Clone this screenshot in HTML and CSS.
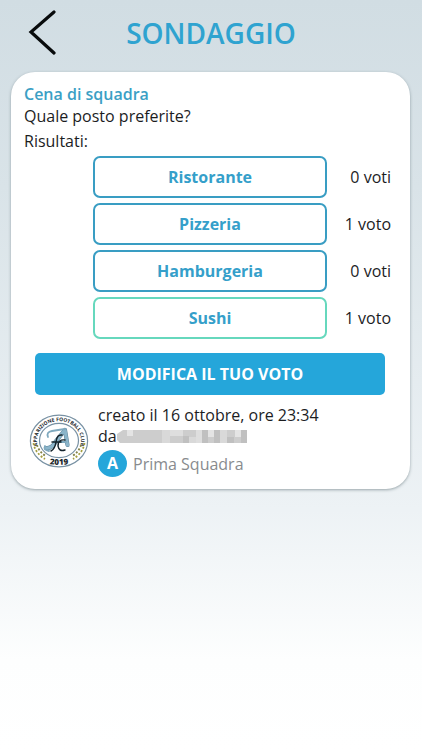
FILE: index.html
```html
<!DOCTYPE html>
<html lang="it">
<head>
<meta charset="utf-8">
<meta name="viewport" content="width=device-width, initial-scale=1">
<title>Sondaggio</title>
<link rel="stylesheet" href="styles.css">
</head>
<body>
<header class="topbar">
  <button class="back" type="button" aria-label="Indietro">
    <svg viewBox="0 0 28 46" width="28" height="46"><path d="M26 2 L3 22 L26 43" fill="none" stroke="#080b0c" stroke-width="3.200" stroke-linecap="round"/></svg>
  </button>
  <h1 class="title">SONDAGGIO</h1>
</header>
<main class="card">
  <h2 class="name">Cena di squadra</h2>
  <p class="question">Quale posto preferite?</p>
  <p class="label">Risultati:</p>
  <ul class="options">
    <li class="row"><button class="option" type="button">Ristorante</button><span class="votes">0 voti</span></li>
    <li class="row"><button class="option" type="button">Pizzeria</button><span class="votes">1 voto</span></li>
    <li class="row"><button class="option" type="button">Hamburgeria</button><span class="votes">0 voti</span></li>
    <li class="row"><button class="option chosen" type="button">Sushi</button><span class="votes">1 voto</span></li>
  </ul>
  <button class="edit" type="button">MODIFICA IL TUO VOTO</button>
  <footer class="author">
    <svg class="crest" viewBox="0 0 60 54" width="60" height="54" role="img" aria-label="Apparizione Football Club 2019">
      <defs>
        <path id="arc" d="M14 40 A22 19.500 0 1 1 46 40"/>
        <path id="year" d="M15 49.500 Q30 52 45 49.500"/>
      </defs>
      <ellipse cx="30" cy="27" rx="28.600" ry="25.800" fill="#fff" stroke="#7891a3" stroke-width="1.200"/>
      <ellipse cx="30" cy="26.500" rx="19.500" ry="17.200" fill="#fff" stroke="#7891a3" stroke-width="1.200"/>
      <text class="crest-text"><textPath href="#arc" startOffset="50%">APPARIZIONE FOOTBALL CLUB</textPath></text>
      <g fill="none" stroke="#a39e3e" stroke-width="1.800" stroke-dasharray="2 1.800">
        <path d="M4.500 29 Q6 39 16 45"/><path d="M8 31 Q10 38 17.500 42.500" stroke="#85844a"/>
        <path d="M55.500 29 Q54 39 44 45"/><path d="M52 31 Q50 38 42.500 42.500" stroke="#85844a"/>
      </g>
      <text class="crest-year"><textPath href="#year" startOffset="50%">2019</textPath></text>
      <g fill="none" stroke-linecap="round" stroke-linejoin="round">
        <path d="M17 34 Q23 35 27 27 L36 16 L38.500 31" stroke="#5d8298" stroke-width="4.200"/>
        <path d="M17 34 Q23 35 27 27 L36 16 L38.500 31" stroke="#8bb5ca" stroke-width="3.200"/>
        <path d="M19 23 Q17 18 23 17 Q29 16 36 15 M25 28 H37 M16 32 Q14 36 20 37" stroke="#7fa9be" stroke-width="1.800"/>
        <path d="M33 21 Q28 20 27 28 Q26 35 22 37 M23 28 H32 M36 26 Q29 25 29 32 Q30 38 36 36" stroke="#15242c" stroke-width="1.500"/>
      </g>
    </svg>
    <div class="details">
      <p class="line">creato il 16 ottobre, ore 23:34</p>
      <p class="line by">da<svg class="mosaic" viewBox="0 0 130 13" width="130" height="13" aria-hidden="true">
        <path d="M6 0 H130 V13 H3 L0 10 V4 Z" fill="#cdcdcd"/>
        <path d="M10 0h6v6h-6z M91 0h6v7h-6z M118 0h6v7h-6z" fill="#e4e4e4"/>
        <path d="M45 0h8v13h-8z M103 0h7v13h-7z M72 7h7v6h-7z" fill="#d9d9d9"/>
        <path d="M53 0h13v6H53z M79 0h6v13h-6z" fill="#dedede"/>
        <path d="M66 6h6v7h-6z M85 0h6v13h-6z M97 0h6v13h-6z M110 7h7v6h-7z M124 0h6v13h-6z" fill="#c0c0c0"/>
      </svg></p>
      <p class="team"><span class="badge">A</span><span>Prima Squadra</span></p>
    </div>
  </footer>
</main>
</body>
</html>
```
FILE: styles.css
```css
* { box-sizing: border-box; }

html { min-height: 100%; }

body {
  margin: 0;
  min-height: 100vh;
  background: linear-gradient(#d1dde3 0%, #d9e3e8 25%, #edf2f5 68%, #fdfefe 88%, #fff 100%);
  font-family: "Open Sans", sans-serif;
  font-size: 16px;
  line-height: 22px;
  color: #1c1d1f;
}

h1, h2, p, ul { margin: 0; padding: 0; }

button { font: inherit; padding: 0; cursor: pointer; }

.topbar {
  display: grid;
  grid-template-columns: 56px 1fr 56px;
  align-items: center;
  height: 72px;
  padding-bottom: 6px;
}

.back {
  display: flex;
  justify-content: flex-end;
  border: 0;
  background: none;
}

.title {
  text-align: center;
  font-size: 28px;
  line-height: 40px;
  font-weight: 600;
  color: #2fa3d0;
}

.card {
  margin: 0 12px 0 11px;
  padding: 11px 14px 12px 13px;
  border-radius: 24px;
  background: #fff;
  box-shadow: 0 1px 3px rgba(70, 90, 95, .5);
}

.name {
  font-size: 16px;
  line-height: 22px;
  font-weight: 600;
  color: #3b9fc5;
}

.label { padding-top: 3px; }

.options {
  display: grid;
  gap: 5px;
  padding: 4px 5px 0 0;
  list-style: none;
}

.row {
  display: grid;
  grid-template-columns: 69px 1fr 64px;
  align-items: center;
}

.option {
  grid-column: 2;
  height: 42px;
  border: 2px solid #399dc3;
  border-radius: 7px;
  background: #fff;
  font-weight: 700;
  color: #359fca;
}

.chosen { border-color: #66d8bd; }

.votes { text-align: right; }

.edit {
  display: block;
  width: calc(100% - 22px);
  height: 42px;
  margin: 14px auto 0;
  border: 0;
  border-radius: 5px;
  background: #25a6da;
  font-weight: 700;
  color: #fff;
}

.author {
  display: flex;
  gap: 9px;
  padding: 10px 0 0 5px;
}

.crest { flex: none; margin-top: 9px; }

.crest-text, .crest-year {
  font-family: "Open Sans", sans-serif;
  font-weight: 700;
  text-anchor: middle;
  fill: #1d282d;
}

.crest-text { font-size: 5px; }
.crest-year { font-size: 8px; font-weight: 800; }

.line { line-height: 21px; }

.by { display: flex; align-items: center; }

.team {
  display: flex;
  align-items: center;
  gap: 6px;
  padding-top: 3px;
  color: #888b8e;
}

.badge {
  width: 29px;
  height: 27px;
  border-radius: 50%;
  background: #25a6da;
  text-align: center;
  line-height: 27px;
  font-weight: 700;
  color: #fff;
}
```
